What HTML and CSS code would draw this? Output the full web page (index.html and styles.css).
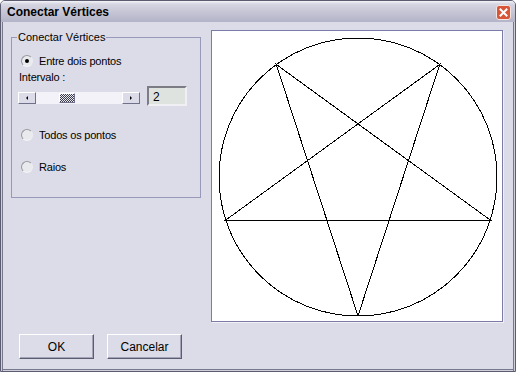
FILE: index.html
```html
<!DOCTYPE html>
<html lang="pt-BR">
<head>
    <meta charset="UTF-8">
    <title>Conectar Vértices</title>
    <link rel="stylesheet" href="styles.css">
</head>
<body>
    <div class="window">
        <div class="titlebar">
            <span class="title">Conectar Vértices</span>
            <span class="close">
                <svg width="15" height="15" viewBox="0 0 15 15">
                    <rect x="0.5" y="0.5" width="14" height="14" rx="2.5" fill="#d8553a" stroke="#f4e6e2"/>
                    <path d="M4.5 4.5 L10.5 10.5 M10.5 4.5 L4.5 10.5" stroke="#fff" stroke-width="2" stroke-linecap="square"/>
                </svg>
            </span>
        </div>

        <div class="client">
            <div class="main">
                <fieldset class="group">
                    <legend>Conectar Vértices</legend>
                    <div class="radio first checked"><span class="circle"></span>Entre dois pontos</div>
                    <div class="interval-label">Intervalo :</div>
                    <div class="interval-row">
                        <div class="scrollbar">
                            <span class="sb-btn"><span class="arrow left"></span></span>
                            <span class="sb-track"><span class="sb-thumb"></span></span>
                            <span class="sb-btn"><span class="arrow right"></span></span>
                        </div>
                        <div class="textbox">2</div>
                    </div>
                    <div class="radio todos"><span class="circle"></span>Todos os pontos</div>
                    <div class="radio raios"><span class="circle"></span>Raios</div>
                </fieldset>

                <div class="canvas">
                    <svg width="290" height="290" viewBox="0 0 290 290" shape-rendering="crispEdges">
                        <circle cx="146" cy="146" r="139" fill="none" stroke="#000" stroke-width="1"/>
                        <!-- pentagrama com a ponta para baixo -->
                        <polyline points="146,285 64.3,33.5 278.2,189 13.8,189 227.7,33.5 146,285" fill="none" stroke="#000" stroke-width="1"/>
                    </svg>
                </div>
            </div>

            <div class="buttons">
                <button class="btn">OK</button>
                <button class="btn">Cancelar</button>
            </div>
        </div>
    </div>
</body>
</html>
```

FILE: styles.css
```css
body {
    margin: 0;
    background-color: #fff;
    font-family: "Liberation Sans", Arial, sans-serif;
    font-size: 11px;
    color: #000;
}
.window {
    width: 516px;
    height: 372px;
    box-sizing: border-box;
    border: 1px solid #5c5c70;
    border-radius: 5px 5px 0 0;
    background-color: #dcdce8;
    display: flex;
    flex-direction: column;
    overflow: hidden;
}
.titlebar {
    height: 21px;
    flex-shrink: 0;
    display: flex;
    align-items: center;
    justify-content: space-between;
    padding: 0 4px 0 6px;
    background: linear-gradient(#f4f4f8 0, #d6d6e2 3px, #c6c6d6 50%, #b4b4c8 100%);
}
.title {
    font-weight: bold;
    font-size: 12px;
    color: #000;
}
.close {
    display: flex;
    margin-top: 2px;
}
.close svg {
    display: block;
}
.client {
    flex: 1;
    padding: 8px 10px 0 10px;
    box-shadow: inset 1px 0 #cfcfdc, inset 2px 0 #78788c,
                inset -1px 0 #cfcfdc, inset -2px 0 #78788c,
                inset 0 -1px #cfcfdc, inset 0 -2px #78788c;
}
.main {
    display: flex;
    align-items: flex-start;
    gap: 10px;
}
.group {
    width: 190px;
    height: 167px;
    box-sizing: border-box;
    margin: 1px 0 0 0;
    padding: 0 6px 0 7px;
    border: 1px solid #9898b8;
}
.group legend {
    padding: 0 1px;
    margin-left: -2px;
    line-height: 13px;
}
.radio {
    display: flex;
    align-items: center;
    height: 13px;
    margin-left: 2px;
    letter-spacing: -0.2px;
}
.radio.first {
    margin-top: 10px;
}
.radio.todos {
    margin-top: 22px;
}
.radio.raios {
    margin-top: 19px;
}
.circle {
    width: 10px;
    height: 10px;
    margin-right: 6px;
    border-radius: 50%;
    border: 1px solid;
    border-color: #98989c #ececf2 #f4f4f8 #98989c;
    background-color: #e8eaee;
    display: flex;
    align-items: center;
    justify-content: center;
}
.radio.checked .circle::after {
    content: "";
    width: 4px;
    height: 4px;
    border-radius: 50%;
    background-color: #000;
}
.interval-label {
    margin-top: 4px;
    line-height: 13px;
    letter-spacing: -0.2px;
}
.interval-row {
    display: flex;
    align-items: flex-start;
    gap: 7px;
    margin-top: 2px;
}
.scrollbar {
    width: 122px;
    height: 12px;
    margin: 6px 0 0 -1px;
    display: flex;
    background-color: #f2f2f8;
}
.sb-btn {
    width: 18px;
    box-sizing: border-box;
    background-color: #dcdce8;
    border: 1px solid;
    border-color: #fff #70708a #70708a #fff;
    display: flex;
    align-items: center;
    justify-content: center;
}
.arrow {
    width: 0;
    height: 0;
    border-top: 2px solid transparent;
    border-bottom: 2px solid transparent;
}
.arrow.left {
    border-right: 2px solid #000;
}
.arrow.right {
    border-left: 2px solid #000;
}
.sb-track {
    flex: 1;
    display: flex;
    align-items: center;
}
.sb-thumb {
    width: 16px;
    height: 10px;
    margin-left: 23px;
    box-sizing: border-box;
    border: 1px solid;
    border-color: #fff #70708a #70708a #fff;
    background: repeating-conic-gradient(#3c3c48 0 25%, #e8e8f0 0 50%) 0 0 / 2px 2px;
}
.textbox {
    width: 40px;
    height: 20px;
    box-sizing: border-box;
    padding: 1px 0 0 4px;
    font-size: 12px;
    line-height: 16px;
    background-color: #dfe3e0;
    border: 2px solid;
    border-color: #7c7c84 #f0f0f4 #f0f0f4 #7c7c84;
}
.canvas {
    width: 292px;
    height: 292px;
    box-sizing: border-box;
    border: 1px solid #7c7ca8;
    background-color: #fff;
    box-shadow: 1px 1px 0 #f0f0f6;
}
.canvas svg {
    display: block;
}
.buttons {
    display: flex;
    gap: 13px;
    margin: 12px 0 0 8px;
}
.btn {
    width: 75px;
    height: 25px;
    padding: 0;
    font-family: "Liberation Sans", Arial, sans-serif;
    font-size: 12px;
    color: #000;
    background-color: #dcdce8;
    border: 1px solid;
    border-color: #fff #5c5c70 #5c5c70 #fff;
    box-shadow: inset -1px -1px #a4a4b8;
}
```
